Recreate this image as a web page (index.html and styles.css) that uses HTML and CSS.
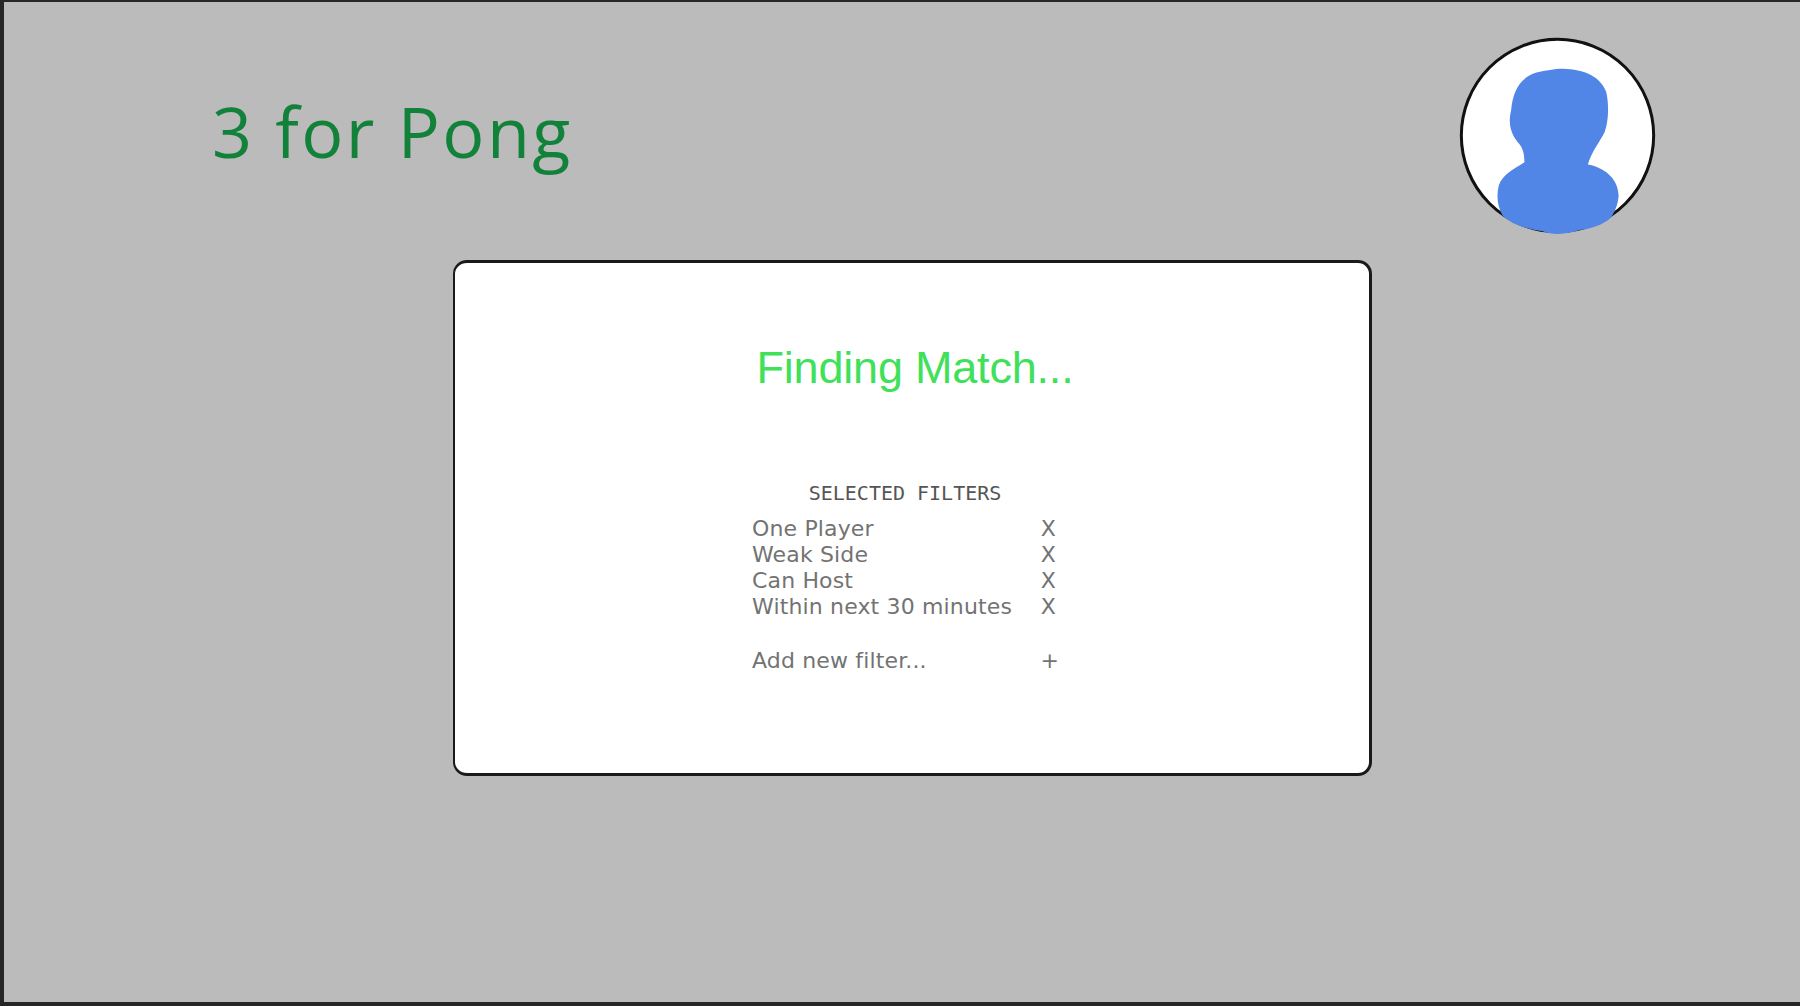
FILE: index.html
```html
<!DOCTYPE html>
<html lang="en">
<head>
    <meta charset="UTF-8">
    <meta name="viewport" content="width=device-width, initial-scale=1.0">
    <title>3 for Pong</title>
    <link rel="stylesheet" href="styles.css">
</head>
<body>
    <div class="frame">
        <header class="top-bar">
            <h1 class="logo">3 for Pong</h1>
            <svg class="avatar" viewBox="60 55 590 590" aria-label="Profile">
                <circle cx="355" cy="350" r="288" fill="#fff" stroke="#111" stroke-width="9"/>
                <path fill="#5286e6" transform="translate(1 5)" d="M360 145 C420 145 480 160 500 215 C510 260 505 310 495 335 C480 365 455 395 445 432 C490 440 535 470 537 525 C535 550 530 565 515 590 C490 615 450 625 420 628 C390 640 340 645 310 632 C270 625 220 615 190 585 C175 560 170 530 178 495 C190 460 225 445 255 425 C255 400 250 380 235 365 C215 340 205 310 215 270 C220 220 235 180 280 160 C310 150 335 148 360 145 Z"/>
            </svg>
        </header>
        <main class="card">
            <h2 class="status">Finding Match...</h2>
            <section class="filters">
                <h3 class="filters-title">SELECTED FILTERS</h3>
                <div class="filter-row"><span>One Player</span><span>X</span></div>
                <div class="filter-row"><span>Weak Side</span><span>X</span></div>
                <div class="filter-row"><span>Can Host</span><span>X</span></div>
                <div class="filter-row"><span>Within next 30 minutes</span><span>X</span></div>
                <div class="filter-row add-row"><span>Add new filter...</span><span>+</span></div>
            </section>
        </main>
    </div>
</body>
</html>
```

FILE: styles.css
```css
html, body {
    margin: 0;
    height: 100%;
}
body {
    background-color: #262626;
    overflow: hidden;
}
.frame {
    box-sizing: border-box;
    height: 1000px;
    margin: 2px 0 0 4px;
    padding: 35px 144px 0 209px;
    background-color: #bbb;
}
.top-bar {
    display: flex;
    justify-content: space-between;
    align-items: flex-start;
    height: 223px;
}
.logo {
    margin: 44px 0 0 -1px;
    font-family: "Open Sans", sans-serif;
    font-size: 70px;
    font-weight: 400;
    letter-spacing: 2.5px;
    line-height: 100px;
    color: #12823b;
}
.avatar {
    width: 197px;
    height: 197px;
}
.card {
    box-sizing: border-box;
    width: 919px;
    height: 516px;
    margin-left: 240px;
    padding-top: 78px;
    background-color: #fff;
    border: 3px solid #1a1a1a;
    border-left-width: 2px;
    border-radius: 14px;
}
.status {
    margin: 0;
    padding-left: 6px;
    font-family: "Liberation Sans", sans-serif;
    font-size: 45px;
    font-weight: 400;
    letter-spacing: -0.2px;
    line-height: 54px;
    text-align: center;
    color: #3fe05a;
}
.filters {
    width: 304px;
    margin: 85px 0 0 297px;
    font-family: "DejaVu Sans", sans-serif;
    font-size: 22px;
    letter-spacing: 0.15px;
    line-height: 26px;
    color: #737373;
}
.filters-title {
    margin: 0 0 10px;
    padding-left: 2px;
    font-family: "DejaVu Sans Mono", monospace;
    font-size: 20px;
    font-weight: 400;
    letter-spacing: 0;
    line-height: 26px;
    text-align: center;
    color: #555;
}
.filter-row {
    display: flex;
    justify-content: space-between;
}
.add-row {
    margin: 28px -3px 0 0;
}
```
